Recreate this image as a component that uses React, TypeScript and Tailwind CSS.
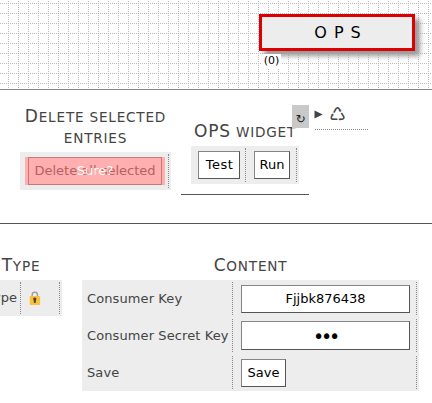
import type { ReactNode } from 'react';

function DotGrid() {
  return (
    <svg className="absolute inset-0 h-full w-full" shapeRendering="crispEdges" aria-hidden="true">
      <defs>
        <pattern id="dots" width="10" height="10" patternUnits="userSpaceOnUse">
          <path
            fill="#bbbbbb"
            d="M0 3h1v1h-1z M2 3h1v1h-1z M4 3h1v1h-1z M6 3h1v1h-1z M8 3h1v1h-1z M8 1h1v1h-1z M8 5h1v1h-1z M8 7h1v1h-1z M8 9h1v1h-1z"
          />
        </pattern>
      </defs>
      <rect width="100%" height="100%" fill="url(#dots)" />
    </svg>
  );
}

function Heading({ children, className = '' }: { children: ReactNode; className?: string }) {
  return (
    <h2 className={`text-center text-[17px] leading-[21px] tracking-[0.8px] whitespace-nowrap text-[#444] ${className}`}>
      {children}
    </h2>
  );
}

// Small capitals at four fifths of the heading's size
function Small({ children }: { children: ReactNode }) {
  return <span className="text-[0.8em] leading-[0] uppercase">{children}</span>;
}

const control = 'border border-t-[#858585] border-l-[#858585] border-r-[#555] border-b-[#555] bg-white text-black text-center whitespace-nowrap';

function Field({ label, children }: { label: string; children: ReactNode }) {
  return (
    <div className="flex h-[33px]">
      <div className="flex w-[149px] items-center border-r border-dotted border-[#888] pl-[3px] tracking-[0.1px] whitespace-nowrap">{label}</div>
      <div className="flex w-[184px] items-center border-r border-dotted border-[#888] pl-2">{children}</div>
    </div>
  );
}

export default function App() {
  return (
    <div className="h-[403px] w-[432px] overflow-hidden bg-white font-['DejaVu_Sans',sans-serif] text-[13px] text-[#444]">
      <header className="relative h-[90px] border-b border-[#888] pt-[14px] pl-[259px]">
        <DotGrid />
        <div className="relative flex h-[37px] w-[156px] items-center justify-center border-3 border-[#dd0000] bg-[#ededed] text-[16px] tracking-[7px] text-black shadow-[5px_5px_5px_#999]">
          <span className="pl-[8px]">OPS</span>
        </div>
        <div className="relative mt-[3px] ml-[3px] h-[14px] w-[19px] bg-white text-center text-[11px] leading-[13px] text-black">(0)</div>
      </header>

      <section className="flex h-[134px] items-start border-b border-[#555] pl-5">
        <div className="w-[151px] pt-4">
          <Heading>D<Small>elete selected</Small><br /><Small>entries</Small></Heading>
          <div className="mt-1 flex h-[38px] bg-[#ededed] py-[2px] pr-[2px] pl-[5px]">
            <div className="flex w-[144px] border-r border-dotted border-[#888] pt-[3px]">
              <div className="relative flex h-7 w-[140px] justify-center bg-[#ffafaf]">
                <button className="h-7 w-[134px] border border-[#cc7777] leading-[26px] whitespace-nowrap text-[#b26262]">Delete all selected</button>
                <span className="absolute inset-0 text-center leading-[27px] text-white">Sure?</span>
              </div>
            </div>
          </div>
        </div>

        <div className="relative ml-[10px] h-[105px] w-[128px] border-b border-[#555] pt-[31px] pl-[10px]">
          <Heading className="w-[108px]">OPS<Small> widget</Small></Heading>
          <div className="mt-1 flex h-[38px] w-[108px] bg-[#ededed] py-[2px] pl-[7px]">
            <div className="w-[48px] border-r border-dotted border-[#888] pt-[3px]">
              <button className={`${control} block h-7 w-[42px] pl-px leading-[26px] tracking-[0.5px]`}>Test</button>
            </div>
            <div className="w-[51px] border-r border-dotted border-[#888] pt-[3px] pl-2">
              <button className={`${control} block h-7 w-9 leading-[26px]`}>Run</button>
            </div>
          </div>
          <span className="absolute top-[15px] right-0 h-[23px] w-[17px] bg-[#c9c9c9] text-center text-[12px] leading-[28px] text-[#222]">↻</span>
        </div>

        <div className="mt-[11px] ml-[6px] flex h-[29px] w-[53px] items-center border-b border-dotted border-[#888]">
          <svg className="mb-[2px] -ml-px h-[9px] w-[9px]" viewBox="0 0 9 9" fill="#444"><path d="M.5 .5 8.7 4.5 .5 8.5z" /></svg>
          <span className="mb-[3px] ml-[6px] text-[19px] leading-6">♺</span>
        </div>
      </section>

      <section className="flex items-start pt-[31px]">
        <div className="w-[62px]">
          <Heading className="w-[42px]">T<Small>ype</Small></Heading>
          <div className="mt-1 flex h-9 bg-[#ededed] py-[2px]">
            <div className="flex w-[21px] items-center justify-end overflow-hidden border-r border-dotted border-[#888] pr-[3px]">Type</div>
            <div className="flex w-[39px] items-center border-r border-dotted border-[#888] pl-2">
              <svg className="h-[14px] w-[12px]" viewBox="0 0 12 14">
                <path d="M3.2 6V3.7a2.6 2.6 0 0 1 5.2 0V6" fill="none" stroke="#999" strokeWidth="1.3" />
                <rect x=".7" y="5" width="10.4" height="9" rx="1" fill="#fbc13a" />
                <path d="M4.4 8.5a1.5 1.5 0 1 1 2.8 0L6.6 12H5.1z" fill="#54423f" />
              </svg>
            </div>
          </div>
        </div>

        <div className="ml-5 w-[337px]">
          <Heading>C<Small>ontent</Small></Heading>
          <div className="mt-1 flex h-[111px] flex-col gap-1 bg-[#ededed] px-[2px] py-[2px]">
            <Field label="Consumer Key">
              <input className={`${control} h-7 w-[169px]`} defaultValue="Fjjbk876438" />
            </Field>
            <Field label="Consumer Secret Key">
              <input type="password" className={`${control} h-[29px] w-[169px] pr-[1px] text-[19px] tracking-[-3.2px]`} defaultValue="abc" />
            </Field>
            <Field label="Save">
              <button className={`${control} h-7 w-[45px]`}>Save</button>
            </Field>
          </div>
        </div>
      </section>
    </div>
  );
}
